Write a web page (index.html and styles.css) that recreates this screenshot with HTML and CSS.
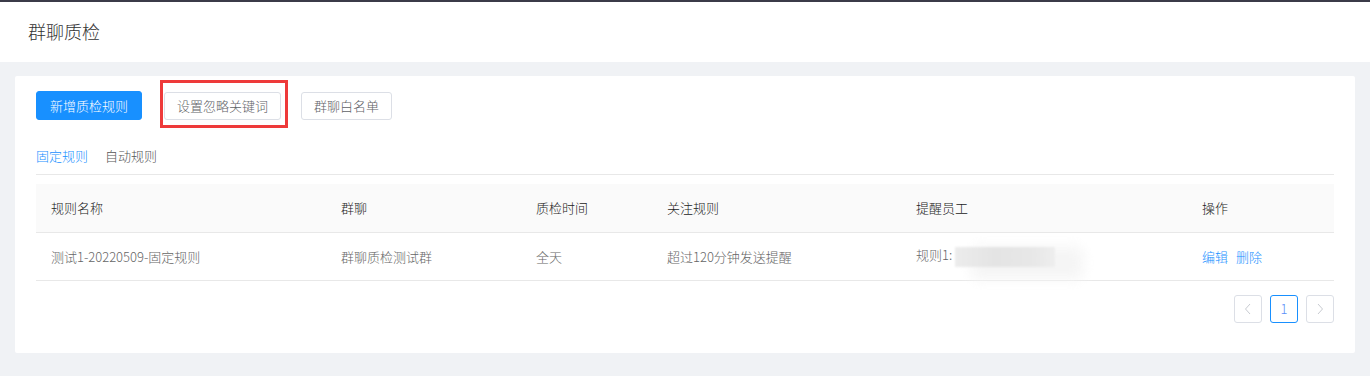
FILE: index.html
```html
<!DOCTYPE html>
<html lang="zh-CN">
<head>
    <meta charset="UTF-8">
    <meta name="viewport" content="width=device-width, initial-scale=1.0">
    <title>群聊质检</title>
    <link rel="stylesheet" href="styles.css">
</head>
<body>
    <div class="topbar"></div>

    <!-- Page header -->
    <div class="page-header">群聊质检</div>

    <div class="main">
        <div class="card">
            <!-- Toolbar -->
            <div class="toolbar">
                <button class="btn btn-primary">新增质检规则</button>
                <span class="marked">
                    <button class="btn">设置忽略关键词</button>
                </span>
                <button class="btn btn-last">群聊白名单</button>
            </div>

            <!-- Tabs -->
            <div class="tabs">
                <span class="tab active">固定规则</span>
                <span class="tab">自动规则</span>
            </div>

            <!-- Table -->
            <table class="rule-table">
                <colgroup>
                    <col style="width: 290px">
                    <col style="width: 195px">
                    <col style="width: 131px">
                    <col style="width: 249px">
                    <col style="width: 286px">
                    <col>
                </colgroup>
                <thead>
                    <tr>
                        <th>规则名称</th>
                        <th>群聊</th>
                        <th>质检时间</th>
                        <th>关注规则</th>
                        <th>提醒员工</th>
                        <th>操作</th>
                    </tr>
                </thead>
                <tbody>
                    <tr>
                        <td>测试1-20220509-固定规则</td>
                        <td>群聊质检测试群</td>
                        <td>全天</td>
                        <td>超过120分钟发送提醒</td>
                        <td>规则1: <span class="blurred"></span></td>
                        <td><a class="link">编辑</a><a class="link">删除</a></td>
                    </tr>
                </tbody>
            </table>

            <!-- Pagination -->
            <div class="pagination">
                <button class="page-btn disabled">
                    <svg width="12" height="12" viewBox="0 0 12 12"><path d="M8 1 L3.5 6 L8 11" fill="none" stroke="#c8cbd1" stroke-width="1"/></svg>
                </button>
                <button class="page-btn current">1</button>
                <button class="page-btn disabled">
                    <svg width="12" height="12" viewBox="0 0 12 12"><path d="M4 1 L8.5 6 L4 11" fill="none" stroke="#c8cbd1" stroke-width="1"/></svg>
                </button>
            </div>
        </div>
    </div>
</body>
</html>
```

FILE: styles.css
```css
:root {
    --primary-color: #1890ff;
    --page-bg: #f0f2f5;
    --border-color: #e8e8e8;
    --text-dark: #333;
    --text-gray: #666;
}

* {
    box-sizing: border-box;
    margin: 0;
    padding: 0;
}

body {
    font-family: "Noto Sans CJK SC", "Noto Sans", sans-serif;
    font-size: 13px;
    font-weight: 300;
    color: var(--text-dark);
    background: var(--page-bg);
    min-height: 100vh;
}

.topbar {
    height: 2px;
    background: #3b3b48;
}

.page-header {
    height: 60px;
    line-height: 58px;
    padding-left: 28px;
    background: white;
    font-size: 18px;
    color: #333;
}

.main {
    padding: 14px 15px;
}

.card {
    background: white;
    border-radius: 2px;
    padding: 15px 21px 30px;
}

.toolbar {
    display: flex;
    align-items: center;
}

.btn {
    height: 28px;
    padding: 0 12px;
    border: 1px solid #dcdfe6;
    border-radius: 3px;
    background: white;
    color: #606266;
    font-family: inherit;
    font-weight: 300;
    font-size: 13px;
    cursor: pointer;
}

.btn-primary {
    height: 29px;
    padding: 0 13px;
    background: var(--primary-color);
    border-color: var(--primary-color);
    color: white;
}

.marked {
    position: relative;
    display: flex;
    margin-left: 22px;
}

/* red annotation frame drawn over the button */
.marked::after {
    content: "";
    position: absolute;
    left: -4px;
    right: -7px;
    top: -12px;
    bottom: -8px;
    border: 3px solid #ee3a3a;
    pointer-events: none;
}

.btn-last {
    margin-left: 20px;
}

.tabs {
    display: flex;
    gap: 17px;
    margin-top: 26px;
    padding-bottom: 8px;
    border-bottom: 1px solid var(--border-color);
    line-height: 20px;
}

.tab {
    color: #555;
}

.tab.active {
    color: var(--primary-color);
}

.rule-table {
    width: 100%;
    margin-top: 9px;
    border-collapse: collapse;
    table-layout: fixed;
}

.rule-table th,
.rule-table td {
    height: 48px;
    padding: 0 15px;
    text-align: left;
    font-weight: 300;
    border-bottom: 1px solid var(--border-color);
    white-space: nowrap;
}

.rule-table th {
    background: #fafafa;
    color: #222;
}

.rule-table td {
    color: var(--text-gray);
}

.blurred {
    display: inline-block;
    width: 100px;
    height: 20px;
    vertical-align: middle;
    background: linear-gradient(90deg, #ececec, #e4e4e4 40%, #e8e8e8 80%, #eeeeee);
    filter: blur(1px);
    box-shadow: 22px 6px 14px 6px #f5f5f5;
}

.link {
    color: var(--primary-color);
    margin-right: 8px;
    cursor: pointer;
}

.pagination {
    display: flex;
    justify-content: flex-end;
    gap: 8px;
    margin-top: 14px;
}

.page-btn {
    width: 28px;
    height: 28px;
    display: flex;
    align-items: center;
    justify-content: center;
    border: 1px solid #dcdfe6;
    border-radius: 3px;
    background: white;
    color: #5b8ff9;
    font-family: inherit;
    font-weight: 300;
    font-size: 13px;
}

.page-btn.current {
    border-color: var(--primary-color);
}
```
